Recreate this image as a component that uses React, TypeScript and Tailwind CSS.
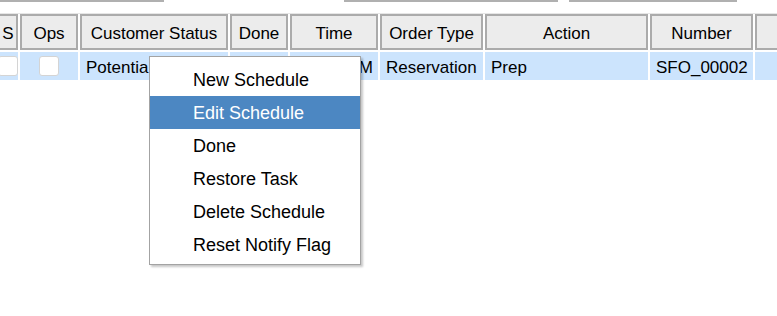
import { Fragment } from "react";

const font = { fontFamily: '"Liberation Sans", Arial, sans-serif' };

// widths include the 2px white gap after each cell
const columns = [
  { key: "s", label: "S", width: 22 },
  { key: "ops", label: "Ops", width: 60 },
  { key: "status", label: "Customer Status", width: 150 },
  { key: "done", label: "Done", width: 60 },
  { key: "time", label: "Time", width: 90 },
  { key: "type", label: "Order Type", width: 105 },
  { key: "action", label: "Action", width: 165 },
  { key: "number", label: "Number", width: 105 },
  { key: "extra", label: "", width: 60 },
];

const menuItems = ["New Schedule", "Edit Schedule", "Done", "Restore Task", "Delete Schedule", "Reset Notify Flag"];

function Checkbox() {
  return <span className="block h-[20px] w-[20px] rounded-[3px] border border-[#d4d4d4] bg-white" />;
}

function DataCell({ col }: { col: string }) {
  if (col === "s" || col === "ops") {
    return (
      <div className="flex h-full items-center justify-center">
        <Checkbox />
      </div>
    );
  }
  const text: Record<string, string> = {
    status: "Potential",
    time: "10:00 AM",
    type: "Reservation",
    action: "Prep",
    number: "SFO_00002",
  };
  return (
    <div className={`flex h-full items-center overflow-hidden whitespace-nowrap pt-[4px] ${col === "time" ? "justify-end pr-[5px]" : "pl-[6px]"}`}>
      {text[col] ?? ""}
    </div>
  );
}

export default function App() {
  return (
    <div className="relative h-[316px] w-[777px] overflow-hidden bg-white text-black" style={font}>
      {/* scrollbar remnants at top */}
      <div className="flex h-[2px]">
        <div className="w-[164px] bg-[#b0b0b0]" />
        <div className="w-[180px]" />
        <div className="w-[214px] bg-[#b0b0b0]" />
        <div className="w-[11px]" />
        <div className="w-[168px] bg-[#b0b0b0]" />
      </div>

      <div className="mt-[11px] border-t border-[#e6e6e6]">
        <div className="ml-[-2px] flex h-[36px] text-[17px]">
          {columns.map((c) => (
            <div key={c.key} className="shrink-0 pr-[2px]" style={{ width: c.width }}>
              <div className="flex h-full items-center justify-center whitespace-nowrap border-2 border-[#ababab] bg-[#ececec] pt-[4px]">
                {c.label}
              </div>
            </div>
          ))}
        </div>

        <div className="ml-[-2px] mt-[2px] flex h-[28px] text-[17px]">
          {columns.map((c) => (
            <Fragment key={c.key}>
              <div className="shrink-0 pr-[2px]" style={{ width: c.width }}>
                <div className="h-full bg-[#cce4fd]">
                  <DataCell col={c.key} />
                </div>
              </div>
            </Fragment>
          ))}
        </div>
      </div>

      {/* context menu */}
      <div className="absolute left-[149px] top-[56px] w-[212px] border border-[#a3a3a3] bg-white pb-[3px] pt-[6px] shadow-[2px_2px_2px_rgba(0,0,0,0.22)]">
        {menuItems.map((item) => (
          <div
            key={item}
            className={`flex h-[33px] items-center whitespace-nowrap pl-[43px] pt-[1px] text-[18px] ${item === "Edit Schedule" ? "bg-[#4c87c2] text-white" : ""}`}
          >
            {item}
          </div>
        ))}
      </div>
    </div>
  );
}
